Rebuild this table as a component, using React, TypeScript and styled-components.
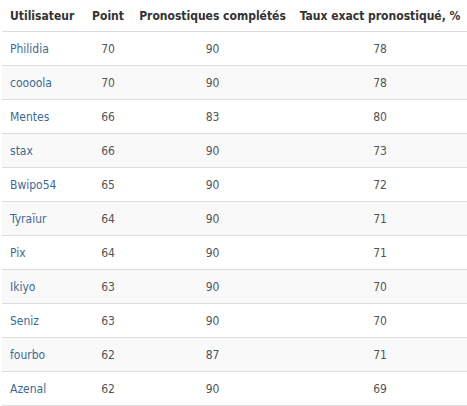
import React from "react";
import styled, { createGlobalStyle } from "styled-components";

const Global = createGlobalStyle`
  html, body { margin: 0; padding: 0; background: #fff; }
  body { font-family: "DejaVu Sans Condensed", "DejaVu Sans", Verdana, sans-serif; }
`;

const Wrap = styled.div`
  padding: 0 0 0 2px;
`;

const Table = styled.table`
  width: 465px;
  table-layout: fixed;
  border-collapse: collapse;
  font-size: 12px;
  color: #555;
`;

const Col = styled.col<{ $w: number }>`
  width: ${(p) => p.$w}px;
`;

const Th = styled.th<{ $align?: string }>`
  font-weight: bold;
  color: #333;
  text-align: ${(p) => p.$align || "center"};
  height: 31px;
  padding: 0 ${(p) => (p.$align === "left" ? "4px 0 8px" : "6px")};
  white-space: nowrap;
  border-bottom: 1px solid #ddd;
  vertical-align: middle;
`;

const Tr = styled.tr<{ $alt: boolean }>`
  background: ${(p) => (p.$alt ? "#f9f9f9" : "#fff")};
`;

const Td = styled.td<{ $align?: string }>`
  text-align: ${(p) => p.$align || "center"};
  height: 33px;
  padding: 0 ${(p) => (p.$align === "left" ? "4px 0 8px" : "6px")};
  border-bottom: 1px solid #ddd;
  vertical-align: middle;
  white-space: nowrap;
`;

const UserLink = styled.a`
  color: #3d6a94;
  text-decoration: none;
`;

const rows: [string, number, number, number][] = [
  ["Philidia", 70, 90, 78],
  ["coooola", 70, 90, 78],
  ["Mentes", 66, 83, 80],
  ["stax", 66, 90, 73],
  ["Bwipo54", 65, 90, 72],
  ["Tyraïur", 64, 90, 71],
  ["Pix", 64, 90, 71],
  ["Ikiyo", 63, 90, 70],
  ["Seniz", 63, 90, 70],
  ["fourbo", 62, 87, 71],
  ["Azenal", 62, 90, 69],
];

export default function App() {
  return (
    <Wrap>
      <Global />
      <Table>
        <colgroup>
          <Col $w={82} />
          <Col $w={48} />
          <Col $w={161} />
          <Col $w={174} />
        </colgroup>
        <thead>
          <tr>
            <Th $align="left">Utilisateur</Th>
            <Th>Point</Th>
            <Th>Pronostiques complétés</Th>
            <Th>Taux exact pronostiqué, %</Th>
          </tr>
        </thead>
        <tbody>
          {rows.map((r, i) => (
            <Tr key={r[0]} $alt={i % 2 === 1}>
              <Td $align="left">
                <UserLink href="#">{r[0]}</UserLink>
              </Td>
              <Td>{r[1]}</Td>
              <Td>{r[2]}</Td>
              <Td>{r[3]}</Td>
            </Tr>
          ))}
        </tbody>
      </Table>
    </Wrap>
  );
}
